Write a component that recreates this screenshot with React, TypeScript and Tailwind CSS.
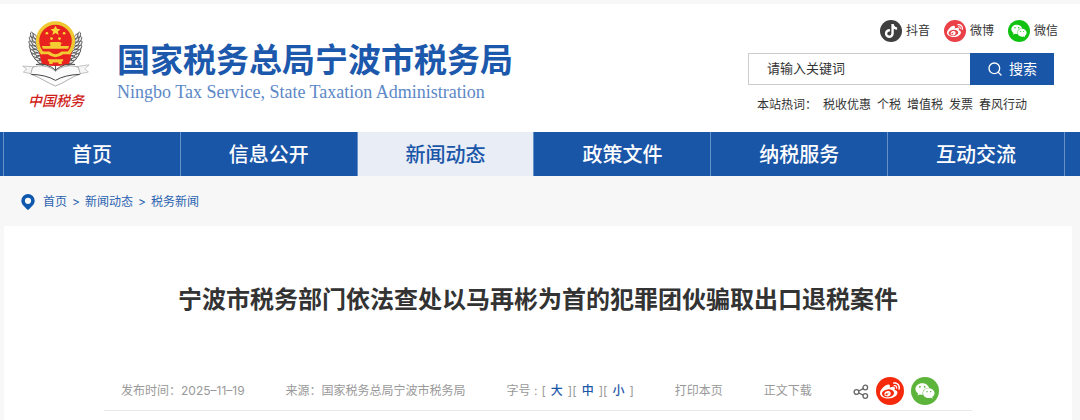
import { Search } from "lucide-react";
import { FaTiktok, FaWeibo, FaWeixin } from "react-icons/fa";

const navItems = [
  { label: "首页", active: false },
  { label: "信息公开", active: false },
  { label: "新闻动态", active: true },
  { label: "政策文件", active: false },
  { label: "纳税服务", active: false },
  { label: "互动交流", active: false },
];

const socials = [
  { label: "抖音", color: "bg-[#3f3f3f]", icon: <FaTiktok className="size-3.5" /> },
  { label: "微博", color: "bg-[#e94147]", icon: <FaWeibo className="size-4" /> },
  { label: "微信", color: "bg-[#12c212]", icon: <FaWeixin className="size-4" /> },
];

const hotWords = ["税收优惠", "个税", "增值税", "发票", "春风行动"];

const crumbs = ["首页", "新闻动态", "税务新闻"];

const fontSizes = ["大", "中", "小"];

// angles (degrees from the top) of the grain pairs around the emblem
const grains = [74, 84, 94, 104, 114, 124, 134, 144];

const Emblem = () => (
  <svg viewBox="20 20 205 205" className="size-17" aria-hidden="true">
    {[1, -1].map((side) => (
      <g key={side} transform={`translate(121 84) scale(${side} 1)`}>
        <path
          d="M68 -18 C88 12 76 54 22 80"
          fill="none"
          stroke="#555"
          strokeWidth="3"
        />
        {grains.map((angle) => (
          <g key={angle} transform={`rotate(${angle - 90})`}>
            <ellipse
              cx="65"
              cy="0"
              rx="9"
              ry="4"
              transform="rotate(-38 65 0)"
              fill="#eee"
              stroke="#444"
              strokeWidth="2.500"
            />
            <ellipse
              cx="75"
              cy="-2"
              rx="8"
              ry="4"
              transform="rotate(-66 75 -2)"
              fill="#eee"
              stroke="#555"
              strokeWidth="2.500"
            />
          </g>
        ))}
      </g>
    ))}
    <path d="M70 108 L80 150 Q121 162 162 150 L172 108 Z" fill="#e8231f" />
    <circle cx="121" cy="80" r="54" fill="#e8231f" stroke="#efc730" strokeWidth="10" />
    <path d="M78 114 H164 L158 150 Q121 160 84 150 Z" fill="#e8231f" />
    <path
      d="M121 34 l4.500 9.500 10.500 1 -8 7 2.500 10.500 -9.500 -5.500 -9.500 5.500 2.500 -10.500 -8 -7 10.500 -1z"
      fill="#f9d93a"
    />
    {[
      [95, 57],
      [147, 57],
      [109, 73],
      [133, 73],
    ].map(([x, y]) => (
      <circle key={x} cx={x} cy={y} r="4" fill="#f9d93a" />
    ))}
    <path
      d="M100 88 L108 83 H134 L142 88 H137 V95 H162 L159 104 H83 L80 95 H105 V88 Z"
      fill="#f4cb32"
    />
    <path d="M76 112 H103 Q121 128 139 112 H166 V120 H144 Q121 138 98 120 H76 Z" fill="#f4cb32" />
    <path
      d="M98 135 h46 v6 h-4 v9 h-10 v-5 h-18 v5 h-10 v-9 h-4z"
      fill="#f4cb32"
    />
    {/* ribbon */}
    <path
      d="M60 158 L22 156 L34 165 L24 174 L52 180 Z M182 158 L222 152 L210 164 L220 174 L190 180 Z"
      fill="#f5f5f5"
      stroke="#a5a5a5"
      strokeWidth="2"
    />
    <path
      d="M52 160 C76 150 104 156 121 172 C138 156 166 150 190 160 L196 180 C172 186 146 208 121 216 C98 208 72 188 46 180 Z"
      fill="#fbfbfb"
      stroke="#888"
      strokeWidth="2"
    />
    <path
      d="M62 151 Q96 146 121 168 Q146 146 180 151 M48 181 Q92 182 121 199 Q150 182 194 181"
      fill="none"
      stroke="#444"
      strokeWidth="3"
    />
    <path d="M121 154 V171" stroke="#555" strokeWidth="3" />
  </svg>
);

const PinIcon = () => (
  <svg viewBox="0 0 14 16" className="h-4 w-3.5" aria-hidden="true">
    <path
      fillRule="evenodd"
      fill="#0d57ad"
      d="M7 0a6.7 6.7 0 0 1 6.7 6.7c0 3.500-3.200 6.100-6.700 9.300C3.500 12.800.3 10.200.3 6.700A6.700 6.700 0 0 1 7 0zm0 3.700a3.100 3.100 0 1 0 0 6.200 3.100 3.100 0 0 0 0-6.200z"
    />
  </svg>
);

const ShareIcon = () => (
  <svg
    viewBox="0 0 16 16"
    className="size-4"
    fill="none"
    stroke="#666"
    strokeWidth="1.300"
    aria-hidden="true"
  >
    <circle cx="3.500" cy="9" r="2.400" />
    <circle cx="12.300" cy="4.500" r="2.300" />
    <circle cx="12.300" cy="13" r="2.300" />
    <path d="M5.700 8 10.200 5.600M5.700 10l4.500 2.200" />
  </svg>
);

const Header = () => (
  <header className="mt-1 flex h-32 items-start justify-between bg-white px-[22px]">
    <div className="flex">
      <div className="flex flex-col items-center pt-[17px]">
        <Emblem />
        <span className="text-sm leading-6 font-medium text-[#cf1f1b] italic">中国税务</span>
      </div>
      <div className="ml-[27px] pt-9 text-[#1c58ab]">
        <h1 className="text-[33px] leading-10 font-bold">国家税务总局宁波市税务局</h1>
        <p className="font-['Liberation_Serif',serif] text-lg leading-6 text-[#5c88c6]">
          Ningbo Tax Service, State Taxation Administration
        </p>
      </div>
    </div>

    <div className="w-[310px] pt-4 text-xs text-[#333]">
      <div className="flex justify-end gap-[14px]">
        {socials.map((item) => (
          <a key={item.label} href="#" className="flex items-center gap-1">
            <span
              className={`flex size-[22px] items-center justify-center rounded-full text-white ${item.color}`}
            >
              {item.icon}
            </span>
            {item.label}
          </a>
        ))}
      </div>
      <form className="mt-[11px] mr-1 flex h-8">
        <input
          type="text"
          aria-label="请输入关键词"
          placeholder="请输入关键词"
          className="min-w-0 flex-1 border border-r-0 border-[#ccc] px-[18px] text-[13px] outline-none placeholder:text-[#333]"
        />
        <button
          type="button"
          className="flex w-[84px] items-center justify-center gap-1.5 bg-[#1a56a8] text-sm text-white"
        >
          <Search className="size-4" />
          搜索
        </button>
      </form>
      <div className="mt-3 ml-[9px] flex gap-1.5 leading-4">
        <span>本站热词：</span>
        {hotWords.map((word) => (
          <a key={word} href="#">
            {word}
          </a>
        ))}
      </div>
    </div>
  </header>
);

const App = () => {
  return (
    <div className="flex min-h-screen flex-col bg-[#f7f7f7] font-[Inter,'Noto_Sans_CJK_SC',sans-serif]">
      <Header />

      <nav className="bg-[#1a56a8] pr-[15px] pl-[3px]">
        <div className="grid grid-cols-6 border-r border-[#6690c8]">
          {navItems.map((item) => (
            <a
              key={item.label}
              href="#"
              className={`flex h-11 items-center justify-center border-l border-[#6690c8] pt-0.5 text-xl font-medium ${
                item.active ? "bg-[#e8edf6] text-[#1a56a8]" : "text-white"
              }`}
            >
              {item.label}
            </a>
          ))}
        </div>
      </nav>

      <div className="flex h-[50px] items-center gap-2 pt-0.5 pl-[21px] text-xs text-[#2a62b0]">
        <PinIcon />
        <div className="flex gap-[5px]">
          {crumbs.map((crumb, index) => (
            <span key={crumb} className="flex gap-[5px]">
              {index > 0 && <span>&gt;</span>}
              <a href="#">{crumb}</a>
            </span>
          ))}
        </div>
      </div>

      <main className="mr-2 ml-1 flex-1 bg-white px-[100px] pt-14">
        <h2 className="text-center text-2xl leading-9 font-bold text-[#333]">
          宁波市税务部门依法查处以马再彬为首的犯罪团伙骗取出口退税案件
        </h2>
        <div className="mt-[59px] flex items-center gap-[41px] border-b border-[#e8e8e8] pb-[5px] pl-[17px] text-xs whitespace-nowrap text-[#999]">
          <span>发布时间：2025–11–19</span>
          <span>来源：国家税务总局宁波市税务局</span>
          <div className="flex">
            <span className="mr-1">字号 :</span>
            {fontSizes.map((size) => (
              <span key={size} className="flex gap-[5px]">
                [
                <button type="button" className="font-medium text-[#1a56a8]">
                  {size}
                </button>
                ]
              </span>
            ))}
          </div>
          <button type="button">打印本页</button>
          <button type="button">正文下载</button>
          <div className="flex items-center gap-[7px]">
            <ShareIcon />
            <a
              href="#"
              aria-label="微博"
              className="flex size-7 items-center justify-center rounded-full bg-[#f52a0c] text-white"
            >
              <FaWeibo className="size-5" />
            </a>
            <a
              href="#"
              aria-label="微信"
              className="flex size-7 items-center justify-center rounded-full bg-[#5cb43a] text-white"
            >
              <FaWeixin className="size-5" />
            </a>
          </div>
        </div>
      </main>
    </div>
  );
};

export default App;
